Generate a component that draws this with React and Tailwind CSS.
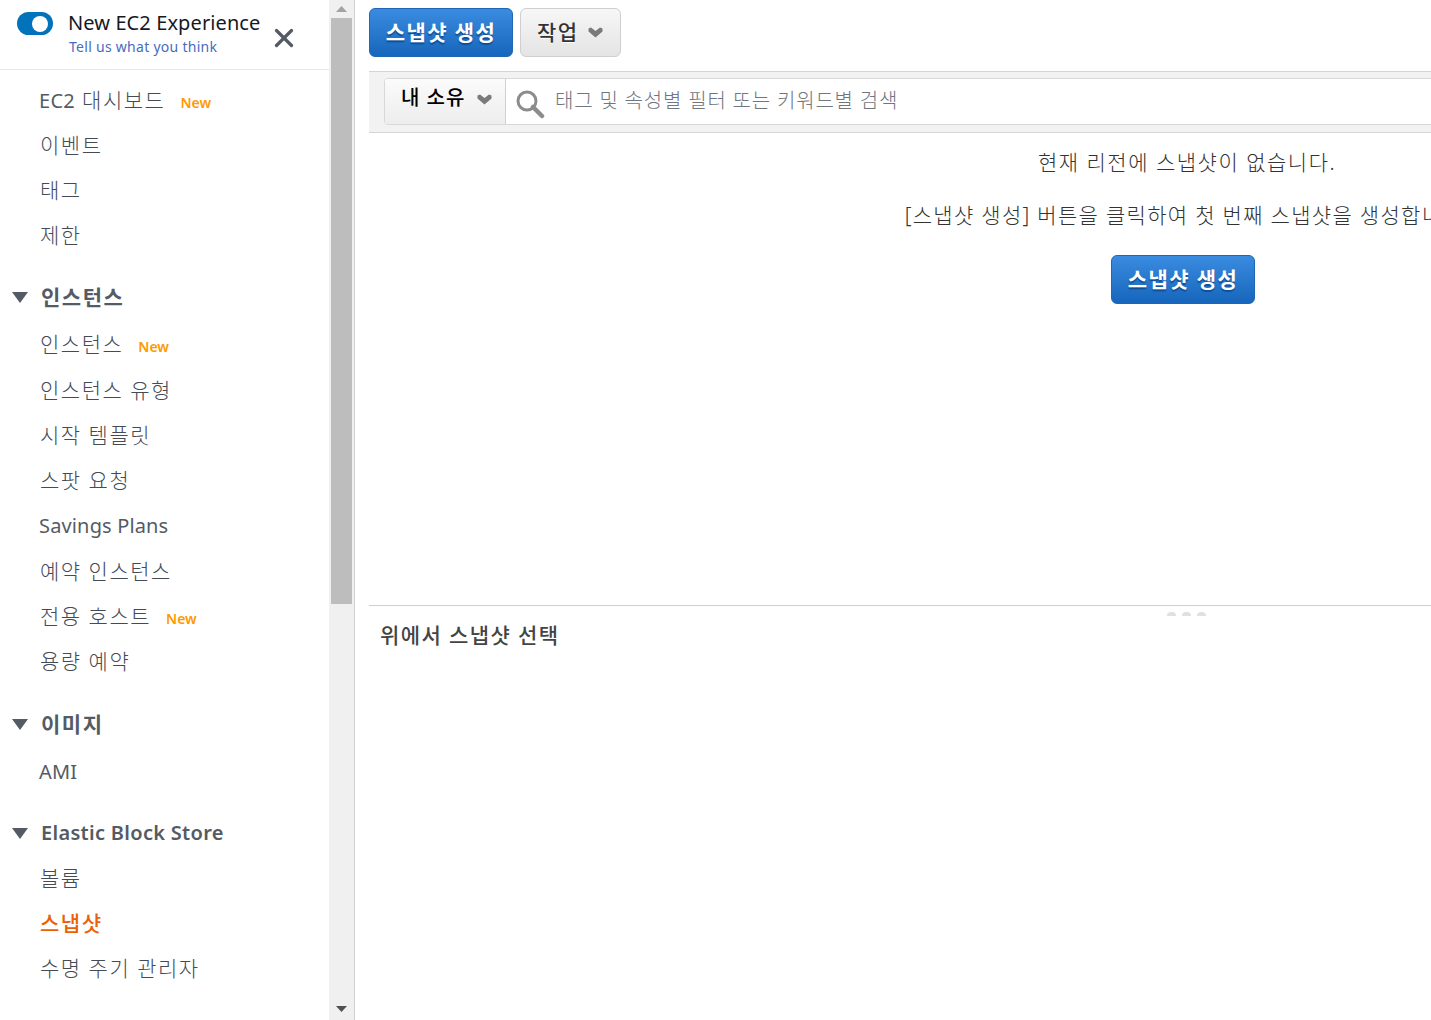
import React from "react";
import { X } from "lucide-react";

const font = "font-['Noto_Sans','Noto_Sans_CJK_KR',sans-serif]";
// hangul in the reference runs wider than Noto CJK, so size + tracking make up for it
const hangul = "text-[21px] tracking-[1.5px]";

function NewBadge({ className }) {
    return <span className={`text-[14px] font-semibold text-[#ff9900] ${className}`}>New</span>;
}

function NavItem({ label, prefix, latin, badge, active, h = "h-[45px]", ml }) {
    let tone = "font-light text-[#444b55]";
    if (active) tone = "font-medium text-[#eb5f07]";
    return (
        <div className={`flex items-center pl-[39px] ${h}`}>
            {prefix && <span className="text-[20px] leading-none text-[#545b64] tracking-[0.3px] mr-[7px]">{prefix}</span>}
            {latin ? (
                <span className="text-[20px] leading-none text-[#545b64] tracking-[0.15px]">{label}</span>
            ) : (
                <span className={`${hangul} leading-none ${prefix ? "" : "ml-[1px]"} ${tone}`}>{label}</span>
            )}
            {badge && <NewBadge className={ml} />}
        </div>
    );
}

function NavSection({ label, latin, mt }) {
    return (
        <div className={`flex items-center h-[46px] pl-[12px] ${mt}`}>
            <svg width="16" height="12" viewBox="0 0 16 12" className="mr-[13px]">
                <path d="M0 1h16L8 12z" fill="#545b64" />
            </svg>
            <span className={`leading-none font-semibold text-[#545b64] ${latin ? "text-[20px] tracking-[0.3px]" : hangul}`}>{label}</span>
        </div>
    );
}

function Chevron({ className }) {
    return (
        <svg width="15" height="11" viewBox="0 0 15 11" className={className}>
            <path d="M0.500 1.500L3 0.500L7.500 4L12 0.500L14.500 1.500V4.500L7.500 10.500L0.500 4.500Z" fill="#7a7a7a" />
        </svg>
    );
}

function BlueButton({ className }) {
    return (
        <button className={`w-[144px] h-[49px] rounded-[6px] border border-[#1f66b5] bg-gradient-to-b from-[#3a8ce0] to-[#1566bc] text-[21px] tracking-[1.4px] font-bold text-white [text-shadow:0_2px_1px_#0f4f96] ${className}`}>
            스냅샷 생성
        </button>
    );
}

function Sidebar() {
    return (
        <aside className="w-[329px] shrink-0 h-full overflow-hidden bg-white">
            <div className="flex items-start h-[70px] border-b border-[#e8e8e8] pl-[17px]">
                <div className="mt-[12px] w-[36px] h-[23px] rounded-full bg-[#0073bb] flex items-center justify-end pr-[5px]">
                    <div className="w-[16px] h-[16px] rounded-full bg-white" />
                </div>
                <div className="ml-[15px] mt-[9px]">
                    <div className="text-[20px] leading-[28px] tracking-[0.1px] text-[#16191f]">New EC2 Experience</div>
                    <div className="text-[14px] leading-[20px] tracking-[0.28px] ml-[1px] text-[#4a6bc0]">Tell us what you think</div>
                </div>
                <X size={30} strokeWidth={2.6} className="ml-[9px] mt-[23px] text-[#545b64]" />
            </div>
            <div className="pt-[8px]">
                <NavItem prefix="EC2" label="대시보드" badge ml="ml-[15px] mt-[3px]" />
                <NavItem label="이벤트" />
                <NavItem label="태그" />
                <NavItem label="제한" />
                <NavSection label="인스턴스" mt="mt-[16px]" />
                <NavItem label="인스턴스" badge ml="ml-[15px] mt-[4px]" h="h-[48px]" />
                <NavItem label="인스턴스 유형" />
                <NavItem label="시작 템플릿" />
                <NavItem label="스팟 요청" />
                <NavItem label="Savings Plans" latin h="h-[46px]" />
                <NavItem label="예약 인스턴스" />
                <NavItem label="전용 호스트" badge ml="ml-[15px] mt-[4px]" h="h-[44px]" />
                <NavItem label="용량 예약" h="h-[47px]" />
                <NavSection label="이미지" mt="mt-[16px]" />
                <NavItem label="AMI" latin h="h-[49px]" />
                <NavSection label="Elastic Block Store" latin mt="mt-[14px]" />
                <NavItem label="볼륨" />
                <NavItem label="스냅샷" active />
                <NavItem label="수명 주기 관리자" />
            </div>
        </aside>
    );
}

function Scrollbar() {
    return (
        <div className="w-[26px] shrink-0 h-full bg-[#f0f0f0] border-r border-[#d0d0d0] flex flex-col items-center">
            <div className="h-[18px] flex items-center justify-center">
                <svg width="11" height="6" viewBox="0 0 11 6"><path d="M0 6h11L5.500 0z" fill="#a3a3a3" /></svg>
            </div>
            <div className="w-[21px] h-[586px] bg-[#bdbdbd] mr-[1px]" />
            <div className="flex-1 flex items-end pb-[8px]">
                <svg width="11" height="6" viewBox="0 0 11 6"><path d="M0 0h11L5.500 6z" fill="#505050" /></svg>
            </div>
        </div>
    );
}

function Main() {
    return (
        <main className="flex-1 min-w-0 h-full overflow-hidden bg-white pl-[14px]">
            <div className="w-[1636px]">
                <div className="flex items-start gap-[7px] h-[71px] pt-[8px]">
                    <BlueButton />
                    <button className="flex items-center w-[101px] h-[49px] rounded-[6px] border border-[#cfcfcf] bg-gradient-to-b from-[#f7f7f7] to-[#e4e4e4] pl-[16px] text-[21px] tracking-[1.5px] font-medium text-[#333] [text-shadow:0_1px_0_#fff]">
                        작업
                        <Chevron className="ml-[9px]" />
                    </button>
                </div>
                <div className="h-[62px] bg-[#f2f2f2] border-y border-[#d4d4d4] pl-[15px] pt-[6px]">
                    <div className="flex h-[47px] rounded-[4px] border border-[#d8d8d8] bg-white overflow-hidden">
                        <div className="flex items-start w-[121px] shrink-0 bg-gradient-to-b from-[#fbfbfb] to-[#ededed] border-r border-[#d0d0d0] pl-[16px] pt-[4px]">
                            <span className="text-[20px] tracking-[1px] font-medium text-black">내 소유</span>
                            <Chevron className="ml-[12px] mt-[11px]" />
                        </div>
                        <svg width="30" height="30" viewBox="0 0 30 30" className="ml-[9px] mt-[10px]">
                            <circle cx="12" cy="12" r="9" fill="none" stroke="#8c8c8c" strokeWidth="3" />
                            <path d="M18 18l9 9" stroke="#8c8c8c" strokeWidth="4.500" strokeLinecap="round" />
                        </svg>
                        <span className="ml-[10px] mt-[7px] text-[20px] tracking-[0.8px] font-light text-[#6f7680]">태그 및 속성별 필터 또는 키워드별 검색</span>
                    </div>
                </div>
                <div className="h-[472px] flex flex-col items-center">
                    <p className={`mt-[12px] ${hangul} leading-[34px] font-light text-[#333]`}>현재 리전에 스냅샷이 없습니다.</p>
                    <p className="mt-[19px] text-[21px] tracking-[1.3px] leading-[34px] font-light text-[#333]">[스냅샷 생성] 버튼을 클릭하여 첫 번째 스냅샷을 생성합니다.</p>
                    <BlueButton className="mt-[23px] mr-[8px]" />
                </div>
                <div className="border-t border-[#cfcfcf] relative">
                    <div className="absolute top-[6px] left-[798px] flex gap-[6px]">
                        <span className="w-[9px] h-[4px] rounded-t-full bg-[#e0e0e0]" />
                        <span className="w-[9px] h-[4px] rounded-t-full bg-[#e0e0e0]" />
                        <span className="w-[9px] h-[4px] rounded-t-full bg-[#e0e0e0]" />
                    </div>
                    <div className="pl-[11px] pt-[12px] text-[21px] tracking-[1.4px] leading-[34px] font-medium text-[#444]">위에서 스냅샷 선택</div>
                </div>
            </div>
        </main>
    );
}

export default function App() {
    return (
        <div className={`flex h-[1020px] w-full overflow-hidden bg-white ${font}`}>
            <Sidebar />
            <Scrollbar />
            <Main />
        </div>
    );
}
